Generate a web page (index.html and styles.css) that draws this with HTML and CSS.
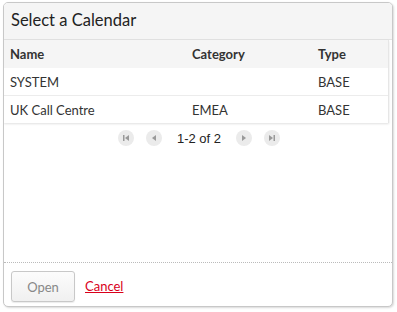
FILE: index.html
```html
<!DOCTYPE html>
<html>
<head>
<meta charset="utf-8">
<link rel="stylesheet" href="styles.css">
</head>
<body>
<div class="dialog">
  <div class="title">Select a Calendar</div>
  <div class="content">
    <div class="grid">
      <div class="row head">
        <div class="c1">Name</div><div class="c2">Category</div><div class="c3">Type</div>
      </div>
      <div class="row">
        <div class="c1">SYSTEM</div><div class="c2"></div><div class="c3">BASE</div>
      </div>
      <div class="row">
        <div class="c1">UK Call Centre</div><div class="c2">EMEA</div><div class="c3">BASE</div>
      </div>
    </div>
    <div class="pager">
      <span class="pbtn"><svg width="8" height="8" viewBox="0 0 8 8"><rect x="1" y="1" width="1.5" height="6" fill="#999"/><path d="M7 1 L3 4 L7 7 Z" fill="#999"/></svg></span>
      <span class="pbtn"><svg width="8" height="8" viewBox="0 0 8 8"><path d="M6 1 L2 4 L6 7 Z" fill="#999"/></svg></span>
      <span class="ptext">1-2 of 2</span>
      <span class="pbtn"><svg width="8" height="8" viewBox="0 0 8 8"><path d="M2 1 L6 4 L2 7 Z" fill="#999"/></svg></span>
      <span class="pbtn"><svg width="8" height="8" viewBox="0 0 8 8"><path d="M1 1 L5 4 L1 7 Z" fill="#999"/><rect x="5.5" y="1" width="1.5" height="6" fill="#999"/></svg></span>
    </div>
  </div>
  <div class="footer">
    <button class="open">Open</button>
    <a class="cancel" href="#">Cancel</a>
  </div>
</div>
</body>
</html>
```
FILE: styles.css
```css
html, body { margin: 0; padding: 0; background: #fff; }
body { padding: 2px 4px 5px 3px; font-family: Lato, "Open Sans", sans-serif; color: #333; }
.dialog {
  width: 388px; height: 303px;
  border: 1px solid #c8c8c8;
  border-radius: 5px;
  box-shadow: 1px 1px 2px rgba(0,0,0,0.15);
  display: flex; flex-direction: column;
  overflow: hidden;
  background: #fff;
}
.title {
  height: 36px; line-height: 34px;
  background: #f5f5f5;
  border-bottom: 1px solid #e2e2e2;
  padding-left: 7px;
  font-size: 16.5px; color: #222;
}
.content { flex: 1; display: flex; flex-direction: column; border-bottom: 1px dotted #bbb; }
.grid { margin-right: 3px; box-shadow: 0 1px 2px rgba(0,0,0,0.12); border-right: 1px solid #e6e6e6; }
.row { display: flex; height: 27px; align-items: center; font-size: 13px; border-bottom: 1px solid #ececec; background: #fff; }
.row:last-child { border-bottom: none; }
.row.head { background: #f5f5f5; font-weight: bold; color: #333; height: 28px; border-bottom: none; }
.c1 { width: 182px; padding-left: 6px; }
.c2 { width: 126px; }
.c3 { flex: 1; }
.pager { display: flex; align-items: center; justify-content: center; height: 28px; margin-top: 1px; font-family: "Liberation Sans", Arial, sans-serif; font-size: 13px; color: #222; padding-left: 2px; }
.pbtn { width: 16px; height: 16px; border-radius: 50%; background: #ebebeb; display: inline-flex; align-items: center; justify-content: center; margin: 0 6px; }
.ptext { margin: 0 9px; }
.footer { height: 43px; display: flex; align-items: flex-start; padding-top: 8px; box-sizing: border-box; padding-left: 7px; gap: 10px; }
.open {
  width: 64px; height: 31px;
  font-family: Lato, "Open Sans", sans-serif; font-size: 13px; color: #888;
  background: linear-gradient(#fcfcfc, #f0f0f0);
  border: 1px solid #c8c8c8; border-radius: 3px;
  box-shadow: 0 1px 1px rgba(0,0,0,0.08);
}
.cancel { color: #d9001b; font-size: 13px; text-decoration: underline; margin-top: 7px; }
```
